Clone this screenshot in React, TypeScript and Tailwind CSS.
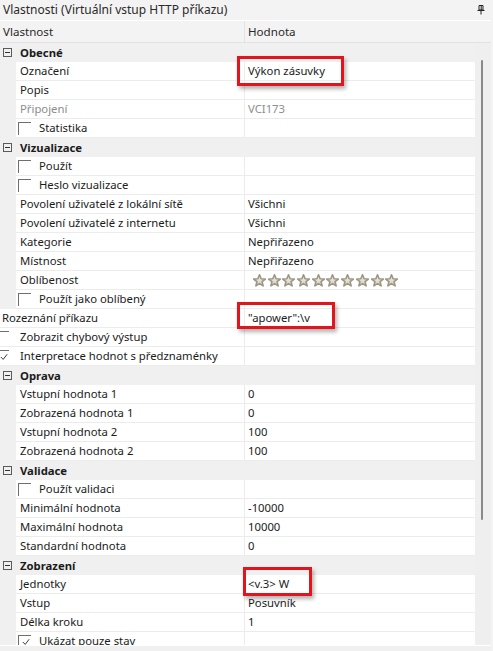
import React from 'react';

type Row =
  | { kind: 'group'; label: string }
  | {
      kind: 'prop';
      label: string;
      value?: string;
      disabled?: boolean;
      check?: 'off' | 'on';
      flush?: boolean;
      stars?: boolean;
    };

const rows: Row[] = [
  { kind: 'group', label: 'Obecné' },
  { kind: 'prop', label: 'Označení', value: 'Výkon zásuvky' },
  { kind: 'prop', label: 'Popis' },
  { kind: 'prop', label: 'Připojení', value: 'VCI173', disabled: true },
  { kind: 'prop', label: 'Statistika', check: 'off' },
  { kind: 'group', label: 'Vizualizace' },
  { kind: 'prop', label: 'Použít', check: 'off' },
  { kind: 'prop', label: 'Heslo vizualizace', check: 'off' },
  { kind: 'prop', label: 'Povolení uživatelé z lokální sítě', value: 'Všichni' },
  { kind: 'prop', label: 'Povolení uživatelé z internetu', value: 'Všichni' },
  { kind: 'prop', label: 'Kategorie', value: 'Nepřiřazeno' },
  { kind: 'prop', label: 'Místnost', value: 'Nepřiřazeno' },
  { kind: 'prop', label: 'Oblíbenost', stars: true },
  { kind: 'prop', label: 'Použít jako oblíbený', check: 'off' },
  { kind: 'prop', label: 'Rozeznání příkazu', value: '"apower":\\v', flush: true },
  { kind: 'prop', label: 'Zobrazit chybový výstup', check: 'off', flush: true },
  { kind: 'prop', label: 'Interpretace hodnot s předznaménky', check: 'on', flush: true },
  { kind: 'group', label: 'Oprava' },
  { kind: 'prop', label: 'Vstupní hodnota 1', value: '0' },
  { kind: 'prop', label: 'Zobrazená hodnota 1', value: '0' },
  { kind: 'prop', label: 'Vstupní hodnota 2', value: '100' },
  { kind: 'prop', label: 'Zobrazená hodnota 2', value: '100' },
  { kind: 'group', label: 'Validace' },
  { kind: 'prop', label: 'Použít validaci', check: 'off' },
  { kind: 'prop', label: 'Minimální hodnota', value: '-10000' },
  { kind: 'prop', label: 'Maximální hodnota', value: '10000' },
  { kind: 'prop', label: 'Standardní hodnota', value: '0' },
  { kind: 'group', label: 'Zobrazení' },
  { kind: 'prop', label: 'Jednotky', value: '<v.3> W' },
  { kind: 'prop', label: 'Vstup', value: 'Posuvník' },
  { kind: 'prop', label: 'Délka kroku', value: '1' },
  { kind: 'prop', label: 'Ukázat pouze stav', check: 'on' },
];

const Checkbox = ({ checked, className }: { checked: boolean; className?: string }) => (
  <span className={`relative block h-[13px] w-[13px] shrink-0 border-l border-t border-[#6f6f6f] ${className ?? ''}`}>
    {checked && (
      <svg viewBox="0 0 10 10" className="absolute left-[3px] top-[2px] h-[8px] w-[8px]">
        <path d="M1 5 L4 8 L9 1.5" fill="none" stroke="#333" strokeWidth="1.2" />
      </svg>
    )}
  </span>
);

const Star = () => (
  <svg viewBox="0 0 24 24" className="h-[13px] w-[13px]">
    <defs>
      <linearGradient id="starFill" x1="0" y1="0" x2="0" y2="1">
        <stop offset="0" stopColor="#f2f0ea" />
        <stop offset="1" stopColor="#d4cfc0" />
      </linearGradient>
    </defs>
    <polygon
      points="12,1.5 15,8.8 22.8,9.3 16.8,14.3 18.7,22 12,17.8 5.3,22 7.2,14.3 1.2,9.3 9,8.8"
      fill="url(#starFill)"
      stroke="#9c9684"
      strokeWidth="3"
      strokeLinejoin="round"
    />
  </svg>
);

const Stars = () => (
  <div className="flex items-center gap-[1.7px] pl-[5px]">
    {Array.from({ length: 10 }).map((_, i) => (
      <Star key={i} />
    ))}
  </div>
);

const MinusBox = () => (
  <span className="flex h-[9px] w-[9px] items-center justify-center border border-[#5a5a5a]">
    <span className="h-px w-[5px] bg-[#333]" />
  </span>
);

const PinIcon = () => (
  <svg viewBox="0 0 8 10" className="h-[10px] w-[8px]">
    <path d="M2 0.5 H6 V5 H2 Z" fill="none" stroke="#222" strokeWidth="1" />
    <path d="M4.2 1 V5" stroke="#222" strokeWidth="1" />
    <path d="M0.5 5.5 H7.5" stroke="#222" strokeWidth="1" />
    <path d="M4 5.5 V9.5" stroke="#222" strokeWidth="1" />
  </svg>
);

const RedBox = ({ className }: { className: string }) => (
  <div
    className={`pointer-events-none absolute border-[3px] border-[#e3141c] shadow-[2px_3px_4px_rgba(0,0,0,0.3)] ${className}`}
  />
);

function PropRow({ row }: { row: Extract<Row, { kind: 'prop' }> }) {
  const textColor = row.disabled ? 'text-[#8d8d8d]' : 'text-[#1b1b1b]';
  return (
    <div className="flex h-[19px] shrink-0">
      {!row.flush && <div className="w-[16px] shrink-0 bg-[#f0f0f0]" />}
      <div className="flex flex-1 border-b border-[#ececec] bg-white">
        <div
          className={`flex items-center overflow-hidden border-r border-[#ececec] ${
            row.flush ? 'w-[245px] pl-[2px]' : 'w-[229px] pl-[4px]'
          }`}
        >
          {row.check && (
            <Checkbox
              checked={row.check === 'on'}
              className={row.flush ? 'ml-[-6px] mr-[11px]' : 'ml-[-2px] mr-[8px]'}
            />
          )}
          <span className={`whitespace-nowrap ${textColor}`}>{row.label}</span>
        </div>
        <div className="flex flex-1 items-center pl-[3px]">
          {row.stars ? <Stars /> : <span className={`whitespace-nowrap ${textColor}`}>{row.value}</span>}
        </div>
      </div>
    </div>
  );
}

function GroupRow({ label }: { label: string }) {
  return (
    <div className="flex h-[19px] shrink-0 items-center bg-[#f0f0f0]">
      <div className="flex w-[20px] shrink-0 pl-[3px]">
        <MinusBox />
      </div>
      <span className="font-bold text-[#1b1b1b]">{label}</span>
    </div>
  );
}

export default function App() {
  return (
    <div
      className="relative flex h-[651px] w-[493px] flex-col overflow-hidden bg-[#f3f3f3] text-[11.3px] leading-none"
      style={{ fontFamily: '"Segoe UI", "Noto Sans", "Open Sans", sans-serif' }}
    >
      <div className="flex h-[20px] shrink-0 items-center justify-between pl-[3px] pr-[8px] text-[12px] text-[#2a2a2a]">
        <span>Vlastnosti (Virtuální vstup HTTP příkazu)</span>
        <PinIcon />
      </div>
      <div className="mr-[2px] flex h-[23px] shrink-0 border-y border-t-white border-b-[#e2e2e2] bg-[#f3f3f3] text-[11.6px] text-[#2a2a2a]">
        <div className="flex w-[245px] items-center border-r border-[#e2e2e2] pl-[3px]">Vlastnost</div>
        <div className="flex flex-1 items-center pl-[3px]">Hodnota</div>
      </div>
      <div className="flex min-h-0 flex-1">
        <div className="flex w-[475px] flex-col overflow-hidden">
          {rows.map((row, i) =>
            row.kind === 'group' ? <GroupRow key={i} label={row.label} /> : <PropRow key={i} row={row} />
          )}
        </div>
        <div className="relative w-[16px] shrink-0 bg-[#efefef]">
          <div className="absolute left-[6px] top-[17px] h-[460px] w-[2px] rounded-full bg-[#8a8a8a]" />
        </div>
      </div>
      <div className="mr-[2px] h-[6px] shrink-0 border-t border-white bg-[#f0f0f0]" />

      <RedBox className="left-[237px] top-[56px] h-[30px] w-[107px]" />
      <RedBox className="left-[237px] top-[302px] h-[27px] w-[98px]" />
      <RedBox className="left-[243px] top-[567px] h-[29px] w-[69px]" />
    </div>
  );
}
